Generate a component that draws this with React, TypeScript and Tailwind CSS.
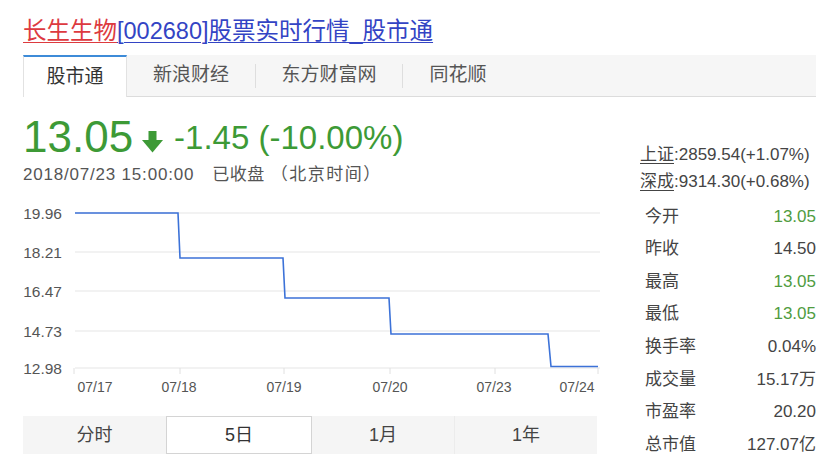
import React from "react";

const FONT = { fontFamily: '"Liberation Sans", "Noto Sans CJK SC", sans-serif' };

function DownArrow() {
  return (
    <svg width="21" height="22" viewBox="0 0 21 22" className="shrink-0">
      <rect x="6.5" y="0" width="8" height="11" fill="#3d9a36" />
      <polygon points="0,9 21,9 10.5,21.5" fill="#3d9a36" />
    </svg>
  );
}

function Chart() {
  const grid = [
    { y: 14, label: "19.96" },
    { y: 53, label: "18.21" },
    { y: 92, label: "16.47" },
    { y: 132, label: "14.73" },
    { y: 169, label: "12.98" },
  ];
  const ticks = [51, 157, 261, 367, 472, 575];
  const xlabels = [
    { x: 72, t: "07/17" },
    { x: 156, t: "07/18" },
    { x: 261, t: "07/19" },
    { x: 367, t: "07/20" },
    { x: 471, t: "07/23" },
    { x: 554, t: "07/24" },
  ];
  return (
    <svg width="577" height="200" viewBox="0 0 577 200" className="block" style={FONT}>
      {grid.map((g) => (
        <g key={g.label}>
          <line x1="52" x2="577" y1={g.y} y2={g.y} stroke="#e6e6e6" strokeWidth="1.2" />
          <text x="39" y={g.y + 5.5} textAnchor="end" fontSize="15.5" fill="#555">
            {g.label}
          </text>
        </g>
      ))}
      {ticks.map((x) => (
        <line key={x} x1={x} x2={x} y1="169" y2="175" stroke="#e0e0e0" strokeWidth="1" />
      ))}
      {xlabels.map((l) => (
        <text key={l.t} x={l.x} y="193" textAnchor="middle" fontSize="14" fill="#555">
          {l.t}
        </text>
      ))}
      <path
        d="M52 14 H155 L157 59 H260 L262 99 H366 L368 135 H525 L528 167.5 H575"
        fill="none"
        stroke="#3c72d8"
        strokeWidth="1.6"
      />
    </svg>
  );
}

const rows: { k: string; v: string; green?: boolean }[] = [
  { k: "今开", v: "13.05", green: true },
  { k: "昨收", v: "14.50" },
  { k: "最高", v: "13.05", green: true },
  { k: "最低", v: "13.05", green: true },
  { k: "换手率", v: "0.04%" },
  { k: "成交量", v: "15.17万" },
  { k: "市盈率", v: "20.20" },
  { k: "总市值", v: "127.07亿" },
];

export default function App() {
  return (
    <div className="w-[830px] h-[472px] bg-white overflow-hidden pl-[23px] text-[#333]" style={FONT}>
      <div className="pt-[17px] h-[55px] text-[23.5px] leading-[28px]">
        <a className="text-[#dd3a3f] underline decoration-1 underline-offset-[3px]">长生生物</a>
        <a className="text-[#3344c4] underline decoration-1 underline-offset-[3px]">[002680]股票实时行情_股市通</a>
      </div>

      <div className="w-[793px] h-[42px] flex bg-[#f6f6f6] border-b border-[#dcdcdc] text-[19px] text-[#555]">
        <div className="w-[104px] h-[42px] bg-white border-t-2 border-t-[#3d8bd8] border-x border-x-[#e2e2e2] flex items-center justify-center text-[#333]">
          股市通
        </div>
        <div className="w-[128px] flex items-center justify-center">新浪财经</div>
        <div className="w-px h-[24px] self-center bg-[#dedede]" />
        <div className="w-[146px] flex items-center justify-center">东方财富网</div>
        <div className="w-px h-[24px] self-center bg-[#dedede]" />
        <div className="w-[110px] flex items-center justify-center">同花顺</div>
      </div>

      <div className="flex">
        <div className="w-[577px] flex flex-col">
          <div className="h-[68px] flex items-end pb-[6px] text-[#3d9a36]">
            <span className="text-[44px] leading-[44px]">13.05</span>
            <span className="ml-[9px] mr-[11px] mb-[6px]">
              <DownArrow />
            </span>
            <span className="text-[33px] leading-[36px] mb-[3px]">-1.45 (-10.00%)</span>
          </div>
          <div className="h-[24px] flex text-[17px] leading-[20px] text-[#555] whitespace-pre">
            <span className="tracking-[0.8px]">2018/07/23 15:00:00</span>
            <span className="ml-[18px] tracking-[0.5px]">已收盘</span>
            <span className="ml-[6px] tracking-[1.5px]">（北京时间）</span>
          </div>
          <div className="mt-[10px]">
            <Chart />
          </div>
          <div className="mt-[17px] h-[38px] w-[574px] flex bg-[#f5f5f5] text-[18px] text-[#444]">
            <div className="w-[143px] flex items-center justify-center">分时</div>
            <div className="w-[146px] flex items-center justify-center bg-white border border-[#d4d4d4] text-[#333]">
              5日
            </div>
            <div className="w-[143px] flex items-center justify-center border-r border-[#ececec]">1月</div>
            <div className="w-[142px] flex items-center justify-center">1年</div>
          </div>
        </div>

        <div className="ml-[40px] w-[176px] flex flex-col">
          <div className="mt-[44px] text-[17px] leading-[27px] text-[#444] whitespace-nowrap">
            <div>
              <span className="underline decoration-1 underline-offset-[3px]">上证</span>:2859.54(+1.07%)
            </div>
            <div>
              <span className="underline decoration-1 underline-offset-[3px]">深成</span>:9314.30(+0.68%)
            </div>
          </div>
          <div className="mt-[5px] pl-[5px]">
            {rows.map((r) => (
              <div key={r.k} className="h-[32.6px] flex items-center justify-between text-[17px]">
                <span className="text-[#444]">{r.k}</span>
                <span className={r.green ? "text-[#4f9c3f]" : "text-[#444]"}>{r.v}</span>
              </div>
            ))}
          </div>
        </div>
      </div>
    </div>
  );
}
